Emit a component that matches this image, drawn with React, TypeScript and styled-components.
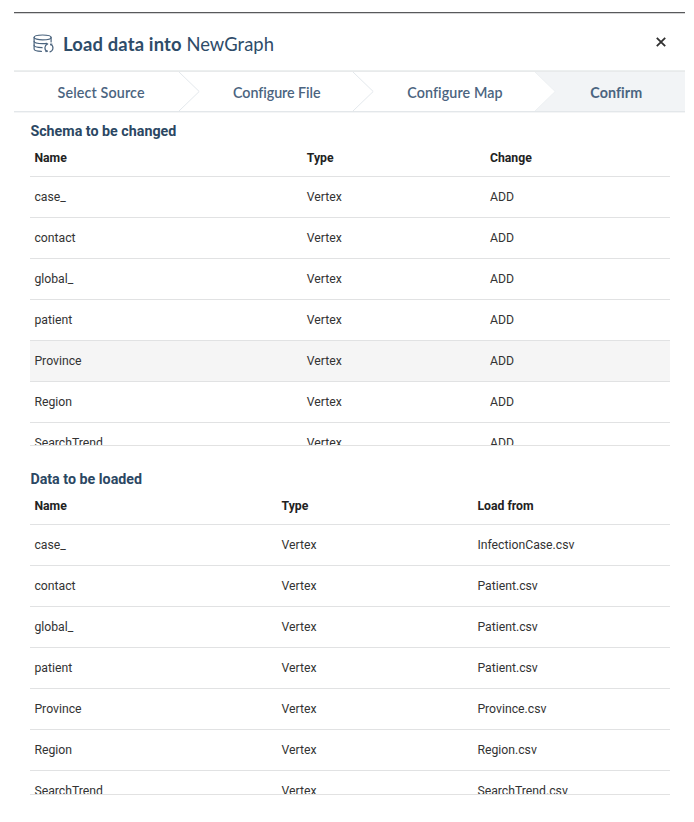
import React from 'react';
import styled, { createGlobalStyle } from 'styled-components';

const GlobalStyle = createGlobalStyle`
  * { box-sizing: border-box; }
  body { margin: 0; background: #fff; font-family: Roboto, sans-serif; color: #303030; }
`;

const Page = styled.div`
  height: 822px;
  padding: 12px 9px 0 14px;
  overflow: hidden;
`;

const Modal = styled.section`
  border-top: 1px solid #58595b;
  box-shadow: inset 0 1px 0 #d4d4d5;
`;

const Header = styled.header`
  display: flex;
  align-items: center;
  height: 58px;
  padding: 4px 17px 0 19px;
  color: #2e4c69;
`;

const Title = styled.h1`
  flex: 1;
  margin: 0 0 0 9px;
  font: 700 18.4px/24px Lato, sans-serif;
  letter-spacing: 0.17px;
  white-space: nowrap;
`;

const GraphName = styled.span`
  font-weight: 400;
  letter-spacing: 0.02px;
`;

const CloseButton = styled.button`
  display: flex;
  width: 14px;
  height: 14px;
  margin-top: -4px;
  padding: 0;
  align-items: center;
  justify-content: center;
  border: 0;
  background: none;
`;

const Steps = styled.nav`
  display: grid;
  grid-template-columns: 164.5px 174px 182.5px 1fr;
  grid-template-rows: 39px;
  height: 41px;
  border-top: 1px solid #e8eaeb;
  border-bottom: 1px solid #e3e7ea;
  box-shadow: 0 -1px 0 #ecefef, 0 1px 0 #f4f5f6;
`;

const Step = styled.div<{ $indent: number; $spacing: number; $active?: boolean }>`
  display: flex;
  align-items: center;
  padding: 2px 0 0 ${(p) => p.$indent}px;
  background: ${(p) => (p.$active ? '#f2f4f6' : '#fff')};
  color: #4b6480;
  font: ${(p) => (p.$active ? 700 : 600)} 14.3px/20px Lato, sans-serif;
  letter-spacing: ${(p) => p.$spacing}px;
  white-space: nowrap;
`;

const Chevron = styled.svg`
  flex: none;
  width: 21px;
  height: 39px;
  margin: -2px -21px 0 auto;
  z-index: 1;
`;

const Section = styled.section<{ $gap: number }>`
  margin: ${(p) => p.$gap}px 15.5px 0 16.4px;
`;

const SectionTitle = styled.h2`
  margin: 0;
  height: 17px;
  color: #2b4763;
  font-size: 14.28px;
  font-weight: 700;
  line-height: 18px;
`;

const TableViewport = styled.div<{ $height: number }>`
  height: ${(p) => p.$height}px;
  overflow: hidden;
  border-bottom: 1px solid #e2e2e2;
`;

const Row = styled.div<{ $columns: string; $head?: boolean; $hover?: boolean }>`
  display: grid;
  grid-template-columns: ${(p) => p.$columns};
  align-items: center;
  height: ${(p) => (p.$head ? 38 : 41)}px;
  padding: 0 4px;
  border-bottom: 1px solid #e1e2e3;
  background: ${(p) => (p.$hover ? '#f5f5f5' : '#fff')};
  color: ${(p) => (p.$head ? '#222' : '#333')};
  font-size: 12.24px;
  font-weight: ${(p) => (p.$head ? 700 : 400)};
  line-height: 16px;
`;

function DatabaseIcon() {
  return (
    <svg width="21" height="20" viewBox="0 0 21 20" fill="none" stroke="#4c657f" strokeWidth="1.2" strokeLinecap="round">
      <ellipse cx="9.6" cy="3.4" rx="8.5" ry="2.4" />
      <path d="M1.1 3.4v11.6c0 1.3 3 2.2 7.3 2.4M18.1 3.4v4.6" />
      <path d="M1.1 7.3c0 1.5 3.8 2.4 8.5 2.4 1.6 0 3-.1 4.2-.4M1.1 11.2c0 1.4 3.5 2.2 8 2.4" />
      <path d="M14.7 9.9a4.1 4.1 0 0 0-.6 7.5M17 17.8a4.1 4.1 0 0 0 .7-7.6" />
      <path d="M12.6 17.6h1.6v-1M19 10h-1.5v1" strokeWidth="0.8" />
    </svg>
  );
}

function StepChevron({ filled }: { filled?: boolean }) {
  return (
    <Chevron viewBox="0 0 21 39" fill="none">
      {filled && <path d="M0 0L20.2 19.5 0 39Z" fill="#fff" />}
      <path d="M0 0L20.2 19.5 0 39" stroke={filled ? '#edf0f2' : '#e3e8ec'} />
    </Chevron>
  );
}

type TableProps = { title: string; gap: number; height: number; columns: string; head: string[]; rows: string[][]; hovered?: string };

function DataTable({ title, gap, height, columns, head, rows, hovered }: TableProps) {
  return (
    <Section $gap={gap}>
      <SectionTitle>{title}</SectionTitle>
      <TableViewport $height={height}>
        <Row $columns={columns} $head>
          {head.map((h) => <span key={h}>{h}</span>)}
        </Row>
        {rows.map((row) => (
          <Row key={row[0]} $columns={columns} $hover={row[0] === hovered}>
            {row.map((cell, i) => <span key={i}>{cell}</span>)}
          </Row>
        ))}
      </TableViewport>
    </Section>
  );
}

const names = ['case_', 'contact', 'global_', 'patient', 'Province', 'Region', 'SearchTrend'];
const files = ['InfectionCase', 'Patient', 'Patient', 'Patient', 'Province', 'Region', 'SearchTrend'];

export default function App() {
  return (
    <Page>
      <GlobalStyle />
      <Modal>
        <Header>
          <DatabaseIcon />
          <Title>Load data into <GraphName>NewGraph</GraphName></Title>
          <CloseButton aria-label="Close">
            <svg width="10" height="10" viewBox="0 0 10 10" stroke="#303030" strokeWidth="1.8">
              <path d="M.8.8l8.4 8.4M9.2.8L.8 9.2" />
            </svg>
          </CloseButton>
        </Header>
        <Steps>
          <Step $indent={43.6} $spacing={0.13}>Select Source<StepChevron /></Step>
          <Step $indent={54.5} $spacing={-0.06}>Configure File<StepChevron /></Step>
          <Step $indent={54.7} $spacing={0.1}>Configure Map<StepChevron filled /></Step>
          <Step $indent={55.3} $spacing={0.05} $active>Confirm</Step>
        </Steps>
        <DataTable
          title="Schema to be changed" gap={10} height={307} hovered="Province"
          columns="272.4px 183.2px 1fr" head={['Name', 'Type', 'Change']}
          rows={names.map((n) => [n, 'Vertex', 'ADD'])}
        />
        <DataTable
          title="Data to be loaded" gap={24} height={308}
          columns="247.2px 195.8px 1fr" head={['Name', 'Type', 'Load from']}
          rows={names.map((n, i) => [n, 'Vertex', `${files[i]}.csv`])}
        />
      </Modal>
    </Page>
  );
}
